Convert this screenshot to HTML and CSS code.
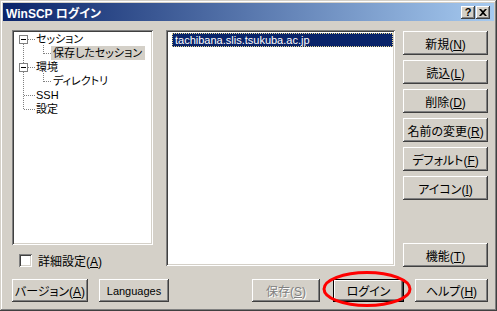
FILE: index.html
```html
<!DOCTYPE html>
<html lang="ja">
<head>
  <meta charset="UTF-8">
  <title>WinSCP ログイン</title>
  <link rel="stylesheet" href="styles.css">
</head>
<body>
  <div class="window">
    <div class="titlebar">
      <span class="title">WinSCP ログイン</span>
      <span class="title-buttons">
        <span class="tbtn">?</span>
        <span class="tbtn close">
          <svg width="8" height="7" viewBox="0 0 8 7"><path d="M0 0h2l2 2l2-2h2l-3 3.5l3 3.5h-2l-2-2l-2 2h-2l3-3.5z" fill="#000"/></svg>
        </span>
      </span>
    </div>

    <div class="main">
      <div class="left">
        <div class="tree sunken">
          <svg class="tree-lines" width="60" height="90" viewBox="0 0 60 90">
            <g stroke="#808080" stroke-dasharray="1 1" fill="none">
              <path d="M11.5 14V33M11.5 42V80"/>
              <path d="M16 9.5H23M16 37.5H23M12 65.5H23M12 79.5H23"/>
              <path d="M31.5 15V24M31.5 43V52M32 23.5H40M32 51.5H40"/>
            </g>
            <g fill="#fff" stroke="#808080">
              <rect x="7.5" y="5.5" width="8" height="8"/>
              <rect x="7.5" y="33.5" width="8" height="8"/>
            </g>
            <path d="M9 9.5H14M9 37.5H14" stroke="#000"/>
          </svg>
          <div class="node">セッション</div>
          <div class="node child"><span class="sel">保存したセッション</span></div>
          <div class="node">環境</div>
          <div class="node child">ディレクトリ</div>
          <div class="node">SSH</div>
          <div class="node">設定</div>
        </div>
        <label class="check-row">
          <span class="checkbox sunken"></span>
          <span>詳細設定(<u>A</u>)</span>
        </label>
      </div>

      <div class="list sunken">
        <div class="item">tachibana.slis.tsukuba.ac.jp</div>
      </div>

      <div class="side">
        <button class="btn">新規(<u>N</u>)</button>
        <button class="btn">読込(<u>L</u>)</button>
        <button class="btn">削除(<u>D</u>)</button>
        <button class="btn">名前の変更(<u>R</u>)</button>
        <button class="btn">デフォルト(<u>F</u>)</button>
        <button class="btn">アイコン(<u>I</u>)</button>
        <button class="btn tools">機能(<u>T</u>)</button>
      </div>
    </div>

    <div class="bottom">
      <button class="btn version">バージョン(<u>A</u>)</button>
      <button class="btn languages">Languages</button>
      <button class="btn save" disabled>保存(<u>S</u>)</button>
      <button class="btn login">ログイン</button>
      <button class="btn help">ヘルプ(<u>H</u>)</button>
    </div>

    <svg class="mark" width="96" height="42" viewBox="0 0 96 42">
      <ellipse cx="48" cy="21" rx="43" ry="16.5" fill="none" stroke="#f00" stroke-width="3"/>
    </svg>
  </div>
</body>
</html>
```

FILE: styles.css
```css
body {
  margin: 0;
  background-color: #d4d0c8;
  font-family: "Liberation Sans", "Noto Sans CJK JP", sans-serif;
  font-size: 12px;
  font-feature-settings: "palt";
  color: #000;
}
.window {
  position: relative;
  width: 497px;
  height: 311px;
  box-sizing: border-box;
  padding: 3px;
  background-color: #d4d0c8;
  box-shadow: inset -1px -1px #404040, inset 1px 1px #d4d0c8, inset -2px -2px #808080, inset 2px 2px #fff;
}
.titlebar {
  height: 18px;
  display: flex;
  align-items: center;
  justify-content: space-between;
  padding: 0 4px 0 3px;
  background: linear-gradient(to right, #0a246a, #a6caf0);
}
.title {
  color: #fff;
  font-weight: bold;
  font-size: 12px;
}
.title-buttons {
  display: flex;
}
.tbtn {
  width: 14px;
  height: 13px;
  box-sizing: border-box;
  display: flex;
  align-items: center;
  justify-content: center;
  background-color: #d4d0c8;
  font-weight: bold;
  font-size: 11px;
  line-height: 1;
  box-shadow: inset -1px -1px #404040, inset 1px 1px #fff, inset -2px -2px #808080;
}
.close {
  margin-left: 1px;
}
.sunken {
  background-color: #fff;
  box-shadow: inset 1px 1px #808080, inset -1px -1px #fff, inset 2px 2px #404040, inset -2px -2px #d4d0c8;
}
.main {
  display: flex;
  padding: 9px 0 0 9px;
  height: 237px;
}
.left {
  width: 141px;
  display: flex;
  flex-direction: column;
}
.tree {
  position: relative;
  height: 215px;
  box-sizing: border-box;
  padding-top: 2px;
  font-size: 11px;
}
.tree-lines {
  position: absolute;
  left: 0;
  top: 0;
}
.node {
  position: relative;
  height: 14px;
  line-height: 14px;
  padding-left: 24px;
  white-space: nowrap;
}
.node.child {
  padding-left: 41px;
}
.sel {
  background-color: #d4d0c8;
  padding: 0 3px 0 2px;
  margin-left: -2px;
  display: inline-block;
}
.check-row {
  display: flex;
  align-items: center;
  gap: 6px;
  margin-top: 9px;
  padding-left: 7px;
  height: 13px;
}
.checkbox {
  width: 13px;
  height: 13px;
}
.list {
  width: 229px;
  height: 236px;
  margin-left: 13px;
  box-sizing: border-box;
  padding: 3px 2px 2px 6px;
}
.item {
  height: 14px;
  line-height: 12px;
  box-sizing: border-box;
  border: 1px dotted #e8d890;
  background-color: #0a246a;
  color: #fff;
  font-size: 11px;
  padding-left: 2px;
}
.side {
  display: flex;
  flex-direction: column;
  gap: 5px;
  margin-left: 8px;
  padding-top: 1px;
}
.btn {
  font: inherit;
  color: #000;
  background-color: #d4d0c8;
  border: none;
  padding: 0;
  width: 85px;
  height: 24px;
  white-space: nowrap;
  box-shadow: inset -1px -1px #404040, inset 1px 1px #fff, inset -2px -2px #808080, inset 2px 2px #d4d0c8;
}
.btn.tools {
  margin-top: auto;
}
.bottom {
  display: flex;
  margin-top: 12px;
  padding-left: 9px;
}
.bottom .btn {
  height: 23px;
}
.version {
  width: 76px !important;
}
.languages {
  width: 70px !important;
  margin-left: 11px;
  font-size: 11px !important;
}
.save {
  width: 68px !important;
  margin-left: auto;
  color: #808080 !important;
  text-shadow: 1px 1px #fff;
}
.login {
  width: 71px !important;
  margin-left: 13px;
  box-shadow: inset 0 0 0 1px #000, inset -2px -2px #404040, inset 2px 2px #fff, inset -3px -3px #808080 !important;
}
.help {
  width: 73px !important;
  margin-left: 11px;
  margin-right: 6px;
}
.mark {
  position: absolute;
  left: 319px;
  top: 268px;
}
```
